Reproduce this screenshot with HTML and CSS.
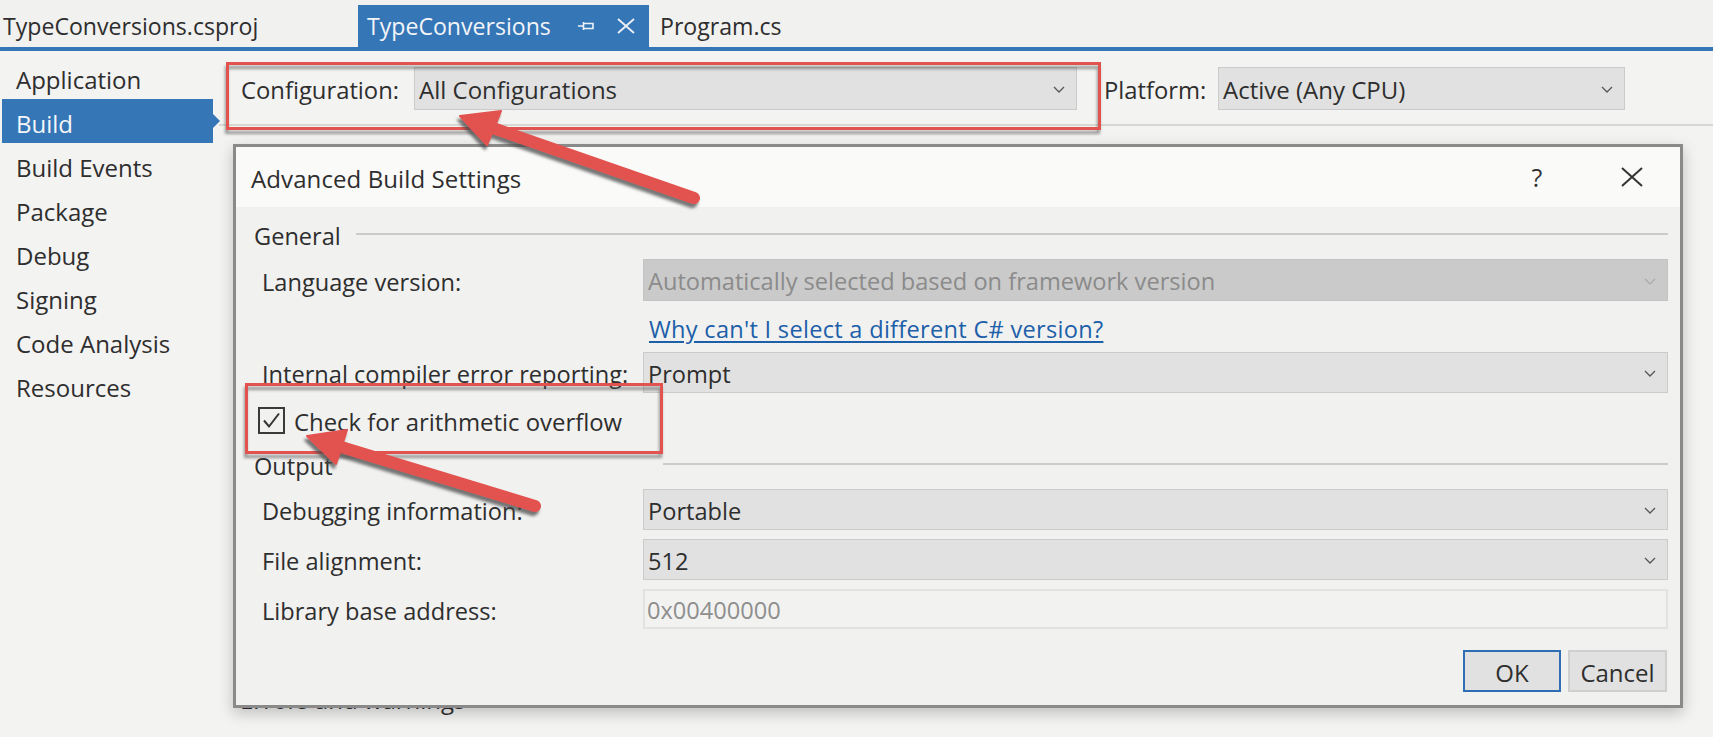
FILE: index.html
```html
<!DOCTYPE html>
<html>
<head>
<meta charset="utf-8">
<title>TypeConversions - Build</title>
<link rel="stylesheet" href="styles.css">
</head>
<body>
<div class="page">
  <div class="tabstrip">
    <div class="tab tab-first">TypeConversions.csproj</div>
    <div class="tab tab-active">
      <span class="tab-name">TypeConversions</span>
      <svg class="pin" width="17" height="10" viewBox="0 0 17 10"><path d="M0 5h5M5.5 1v8M5.5 2.5h9.5v5h-9.5" fill="none" stroke="#eef2f7" stroke-width="1.6"/></svg>
      <svg class="tabx" width="18" height="16" viewBox="0 0 18 16"><path d="M1 1L17 15M17 1L1 15" fill="none" stroke="#eef2f7" stroke-width="1.8"/></svg>
    </div>
    <div class="tab tab-plain">Program.cs</div>
  </div>

  <div class="workspace">
    <nav class="sidebar">
      <div class="nav-item">Application</div>
      <div class="nav-item selected">Build</div>
      <div class="nav-item">Build Events</div>
      <div class="nav-item">Package</div>
      <div class="nav-item">Debug</div>
      <div class="nav-item">Signing</div>
      <div class="nav-item">Code Analysis</div>
      <div class="nav-item">Resources</div>
    </nav>
    <main class="content">
      <div class="config-area">
        <div class="config-row">
          <span class="cfg-label">Configuration:</span>
          <div class="combo cfg-combo"><span>All Configurations</span><svg class="chev" width="12" height="7" viewBox="0 0 12 7"><path d="M1 1l5 5 5-5" fill="none" stroke="#555" stroke-width="1.3"/></svg></div>
          <span class="cfg-label plat-label">Platform:</span>
          <div class="combo plat-combo"><span>Active (Any CPU)</span><svg class="chev" width="12" height="7" viewBox="0 0 12 7"><path d="M1 1l5 5 5-5" fill="none" stroke="#555" stroke-width="1.3"/></svg></div>
        </div>
      </div>
      <div class="section-title">Errors and warnings</div>
    </main>
  </div>

  <div class="dialog">
    <div class="dlg-title">
      <span class="dlg-caption">Advanced Build Settings</span>
      <span class="dlg-btn help">?</span>
      <span class="dlg-btn close"><svg width="22" height="20" viewBox="0 0 22 20"><path d="M1 1L21 19M21 1L1 19" fill="none" stroke="#333" stroke-width="2"/></svg></span>
    </div>
    <div class="dlg-body">
      <div class="group group-general">
        <span class="group-title general-title">General</span>
        <span class="group-line"></span>
      </div>
      <div class="form-row row-lang">
        <span class="lbl">Language version:</span>
        <div class="combo disabled"><span>Automatically selected based on framework version</span><svg class="chev" width="12" height="7" viewBox="0 0 12 7"><path d="M1 1l5 5 5-5" fill="none" stroke="#a9a9a9" stroke-width="1.2"/></svg></div>
      </div>
      <div class="form-row row-link">
        <span class="lbl"></span>
        <a class="link" href="#">Why can't I select a different C# version?</a>
      </div>
      <div class="form-row row-prompt">
        <span class="lbl">Internal compiler error reporting:</span>
        <div class="combo"><span>Prompt</span><svg class="chev" width="12" height="7" viewBox="0 0 12 7"><path d="M1 1l5 5 5-5" fill="none" stroke="#555" stroke-width="1.3"/></svg></div>
      </div>
      <div class="check-row">
        <span class="checkbox"><svg width="23" height="23" viewBox="0 0 23 23"><path d="M4 11.5l5 6L19 4.5" fill="none" stroke="#333" stroke-width="2"/></svg></span>
        <span class="check-label">Check for arithmetic overflow</span>
      </div>
      <div class="group group-output">
        <span class="group-title output-title">Output</span>
        <span class="group-line"></span>
      </div>
      <div class="form-row row-debug">
        <span class="lbl">Debugging information:</span>
        <div class="combo"><span>Portable</span><svg class="chev" width="12" height="7" viewBox="0 0 12 7"><path d="M1 1l5 5 5-5" fill="none" stroke="#555" stroke-width="1.3"/></svg></div>
      </div>
      <div class="form-row row-align">
        <span class="lbl">File alignment:</span>
        <div class="combo"><span>512</span><svg class="chev" width="12" height="7" viewBox="0 0 12 7"><path d="M1 1l5 5 5-5" fill="none" stroke="#555" stroke-width="1.3"/></svg></div>
      </div>
      <div class="form-row row-lib">
        <span class="lbl">Library base address:</span>
        <div class="textbox"><span>0x00400000</span></div>
      </div>
      <div class="buttons">
        <button class="btn btn-ok">OK</button>
        <button class="btn btn-cancel">Cancel</button>
      </div>
    </div>
  </div>

  <div class="callout callout-config"></div>
  <div class="callout callout-check"></div>

  <svg class="arrows" width="1713" height="737" viewBox="0 0 1713 737">
    <defs>
      <filter id="sh" x="-20%" y="-20%" width="140%" height="160%">
        <feDropShadow dx="-2" dy="4" stdDeviation="1.6" flood-color="#4a4a4a" flood-opacity="0.75"/>
      </filter>
    </defs>
    <g filter="url(#sh)" fill="#e2524f" stroke="#e2524f">
      <line x1="490" y1="127" x2="694" y2="198" stroke-width="12" stroke-linecap="round"/>
      <polygon points="460,116 501,111 487,145" stroke-width="2" stroke-linejoin="round"/>
      <line x1="338" y1="446" x2="535" y2="506" stroke-width="12" stroke-linecap="round"/>
      <polygon points="307,436 347,430 336,464" stroke-width="2" stroke-linejoin="round"/>
    </g>
  </svg>
</div>
</body>
</html>
```

FILE: styles.css
```css
* { box-sizing: border-box; }
html, body { margin: 0; padding: 0; }
body {
  background: #f3f3f2;
  font-family: "Open Sans", "Noto Sans", sans-serif;
  color: #303030;
  width: 1713px;
  height: 737px;
  overflow: hidden;
}
.page { position: relative; width: 1713px; height: 737px; }

/* tabs */
.tabstrip {
  display: flex;
  align-items: flex-end;
  height: 51px;
  border-bottom: 4px solid #3576b7;
  background: #f1f1f0;
}
.tab {
  height: 42px;
  display: flex;
  align-items: center;
  font-size: 23.1px;
  color: #2e2e2e;
  white-space: nowrap;
}
.tab-first { width: 358px; padding-left: 3px; }
.tab-active {
  width: 291px;
  background: #3576b7;
  color: #f2f4f7;
  padding-left: 9px;
}
.tab-name { width: 211px; }
.pin { margin-right: 22px; }
.tab-plain { padding-left: 11px; }

/* workspace */
.workspace { display: flex; }
.sidebar {
  width: 219px;
  padding: 4px 0 0 2px;
}
.nav-item {
  position: relative;
  height: 44px;
  width: 211px;
  display: flex;
  align-items: center;
  padding: 5px 0 0 14px;
  font-size: 24px;
  color: #2e2e2e;
}
.nav-item.selected { background: #3576b7; color: #f4f6f9; }
.nav-item.selected::after {
  content: "";
  position: absolute;
  right: -7px;
  top: 15px;
  border-left: 7px solid #3576b7;
  border-top: 7px solid transparent;
  border-bottom: 7px solid transparent;
}
.content { flex: 1; }
.config-area {
  padding: 16px 0 14px 22px;
  border-bottom: 2px solid #d7d7d6;
}
.config-row { display: flex; align-items: center; height: 43px; }
.cfg-label { font-size: 23.8px; color: #2e2e2e; white-space: nowrap; padding-top: 3px; }
.cfg-label:first-child { width: 173px; }
.plat-label { width: 114px; margin-left: 27px; }
.combo {
  height: 100%;
  display: flex;
  align-items: center;
  justify-content: space-between;
  background: #e1e1e1;
  border: 1px solid #cbcbcb;
  padding: 2px 11px 0 4px;
  font-size: 24px;
  color: #2e2e2e;
  white-space: nowrap;
}
.cfg-combo { width: 663px; }
.plat-combo { width: 407px; }
.section-title {
  margin: 559px 0 0 21px;
  font-size: 24px;
  line-height: 30px;
  color: #2e2e2e;
}

/* dialog */
.dialog {
  position: absolute;
  left: 233px;
  top: 144px;
  width: 1450px;
  height: 564px;
  border: 3px solid #8a8a8a;
  background: #f1f1f0;
  box-shadow: 0 5px 14px rgba(0, 0, 0, 0.22);
  display: flex;
  flex-direction: column;
}
.dlg-title {
  height: 60px;
  flex: none;
  background: #fafaf9;
  display: flex;
  align-items: center;
  padding-left: 15px;
}
.dlg-caption { flex: 1; font-size: 24px; letter-spacing: 0.1px; color: #2e2e2e; padding-top: 2px; }
.dlg-btn {
  width: 48px;
  display: flex;
  justify-content: center;
  align-items: center;
  color: #333;
}
.help { font-size: 25px; margin-right: 47px; }
.close { margin-right: 24px; }
.dlg-body {
  flex: 1;
  display: flex;
  flex-direction: column;
  padding: 0 12px 0 18px;
  font-size: 23.6px;
}
.group { display: flex; align-items: center; height: 30px; }
.group-general { margin-top: 14px; }
.group-output { margin-top: 16px; }
.group-title { color: #2e2e2e; flex: none; }
.general-title { width: 102px; }
.output-title { width: 409px; }
.group-line { flex: 1; height: 2px; background: #cbcbcb; margin-bottom: 4px; }
.form-row {
  display: grid;
  grid-template-columns: 381px 1fr;
  align-items: center;
  padding-left: 8px;
}
.lbl { color: #2e2e2e; white-space: nowrap; padding-top: 3px; }
.row-lang { margin-top: 8px; height: 42px; }
.row-link { margin-top: 12px; height: 30px; }
.row-prompt { margin-top: 9px; height: 41px; }
.row-debug { margin-top: 8px; height: 41px; }
.row-align { margin-top: 9px; height: 41px; }
.row-lib { margin-top: 9px; height: 40px; }
.form-row .combo { padding-right: 11px; font-size: 23.6px; }
.combo.disabled { background: #cacaca; border-color: #c4c4c4; color: #8b8b8b; }
.link {
  color: #1d5fa8;
  text-decoration: underline;
  text-underline-offset: 3px;
  padding-left: 6px;
  letter-spacing: 0.28px;
}
.textbox {
  height: 100%;
  display: flex;
  align-items: center;
  padding: 2px 0 0 2px;
  background: #f2f2f1;
  border: 2px solid #e2e2e1;
  color: #8e8e8e;
}
.check-row {
  display: flex;
  align-items: center;
  height: 30px;
  margin-top: 12px;
  padding-left: 4px;
}
.checkbox {
  width: 27px;
  height: 27px;
  border: 2px solid #3a3a3a;
  margin-right: 9px;
  display: flex;
}
.check-label { color: #2e2e2e; padding-top: 3px; font-size: 23.9px; }
.buttons {
  display: flex;
  justify-content: flex-end;
  gap: 7px;
  margin-top: 21px;
  height: 42px;
  padding-right: 1px;
}
.btn {
  font-family: inherit;
  font-size: 24px;
  color: #2e2e2e;
  background: #e1e1e1;
  border: 2px solid #cfcfcf;
  padding: 2px 0 0;
  height: 42px;
}
.btn-ok { width: 98px; border-color: #2f6db5; }
.btn-cancel { width: 99px; }

/* annotations */
.callout {
  position: absolute;
  border: 3px solid #e2524f;
  filter: drop-shadow(-1px 4px 1.5px rgba(70, 70, 70, 0.55));
}
.callout-config { left: 226px; top: 62px; width: 875px; height: 68px; }
.callout-check { left: 245px; top: 383px; width: 418px; height: 71px; }
.arrows { position: absolute; left: 0; top: 0; pointer-events: none; }
```
